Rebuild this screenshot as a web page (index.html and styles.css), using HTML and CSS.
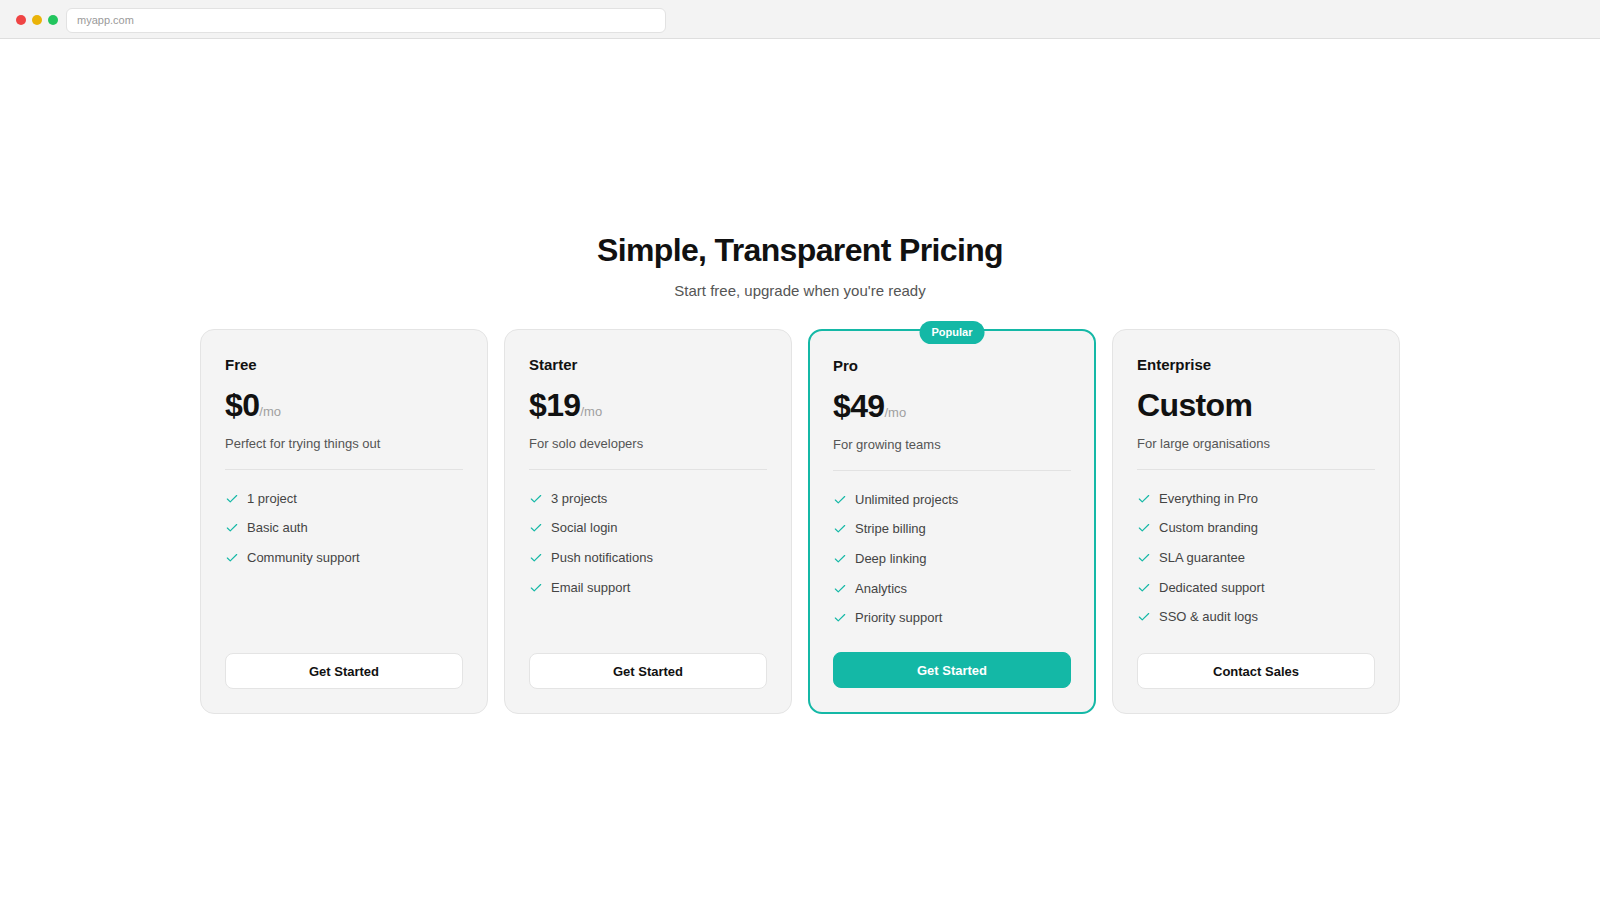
FILE: index.html
```
<!DOCTYPE html>
<html lang="en">
<head>
<meta charset="utf-8">
<title>Pricing</title>
<link rel="stylesheet" href="styles.css">
</head>
<body>
<div class="browser-bar">
  <div class="dots">
    <span class="dot red"></span>
    <span class="dot yellow"></span>
    <span class="dot green"></span>
  </div>
  <div class="address">myapp.com</div>
</div>
<main class="page">
  <section class="pricing">
    <h1 class="title">Simple, Transparent Pricing</h1>
    <p class="subtitle">Start free, upgrade when you're ready</p>
    <div class="plans">
      <div class="plan">
        <div class="plan-name">Free</div>
        <div class="price">$0<span class="per">/mo</span></div>
        <div class="desc">Perfect for trying things out</div>
        <ul class="features">
          <li><svg class="check" viewBox="0 0 24 24"><polyline points="20 6 9 17 4 12"/></svg>1 project</li>
          <li><svg class="check" viewBox="0 0 24 24"><polyline points="20 6 9 17 4 12"/></svg>Basic auth</li>
          <li><svg class="check" viewBox="0 0 24 24"><polyline points="20 6 9 17 4 12"/></svg>Community support</li>
        </ul>
        <button class="btn">Get Started</button>
      </div>
      <div class="plan">
        <div class="plan-name">Starter</div>
        <div class="price">$19<span class="per">/mo</span></div>
        <div class="desc">For solo developers</div>
        <ul class="features">
          <li><svg class="check" viewBox="0 0 24 24"><polyline points="20 6 9 17 4 12"/></svg>3 projects</li>
          <li><svg class="check" viewBox="0 0 24 24"><polyline points="20 6 9 17 4 12"/></svg>Social login</li>
          <li><svg class="check" viewBox="0 0 24 24"><polyline points="20 6 9 17 4 12"/></svg>Push notifications</li>
          <li><svg class="check" viewBox="0 0 24 24"><polyline points="20 6 9 17 4 12"/></svg>Email support</li>
        </ul>
        <button class="btn">Get Started</button>
      </div>
      <div class="plan featured">
        <span class="badge">Popular</span>
        <div class="plan-name">Pro</div>
        <div class="price">$49<span class="per">/mo</span></div>
        <div class="desc">For growing teams</div>
        <ul class="features">
          <li><svg class="check" viewBox="0 0 24 24"><polyline points="20 6 9 17 4 12"/></svg>Unlimited projects</li>
          <li><svg class="check" viewBox="0 0 24 24"><polyline points="20 6 9 17 4 12"/></svg>Stripe billing</li>
          <li><svg class="check" viewBox="0 0 24 24"><polyline points="20 6 9 17 4 12"/></svg>Deep linking</li>
          <li><svg class="check" viewBox="0 0 24 24"><polyline points="20 6 9 17 4 12"/></svg>Analytics</li>
          <li><svg class="check" viewBox="0 0 24 24"><polyline points="20 6 9 17 4 12"/></svg>Priority support</li>
        </ul>
        <button class="btn btn-primary">Get Started</button>
      </div>
      <div class="plan">
        <div class="plan-name">Enterprise</div>
        <div class="price">Custom</div>
        <div class="desc">For large organisations</div>
        <ul class="features">
          <li><svg class="check" viewBox="0 0 24 24"><polyline points="20 6 9 17 4 12"/></svg>Everything in Pro</li>
          <li><svg class="check" viewBox="0 0 24 24"><polyline points="20 6 9 17 4 12"/></svg>Custom branding</li>
          <li><svg class="check" viewBox="0 0 24 24"><polyline points="20 6 9 17 4 12"/></svg>SLA guarantee</li>
          <li><svg class="check" viewBox="0 0 24 24"><polyline points="20 6 9 17 4 12"/></svg>Dedicated support</li>
          <li><svg class="check" viewBox="0 0 24 24"><polyline points="20 6 9 17 4 12"/></svg>SSO &amp; audit logs</li>
        </ul>
        <button class="btn">Contact Sales</button>
      </div>
    </div>
  </section>
</main>
</body>
</html>
```
FILE: styles.css
```
* { box-sizing: border-box; }
html, body { margin: 0; padding: 0; }
body {
  font-family: "Liberation Sans", Arial, sans-serif;
  background: #ffffff;
  color: #111111;
  height: 900px;
  overflow: hidden;
}
.browser-bar {
  height: 39px;
  background: #f3f3f3;
  border-bottom: 1px solid #dedede;
  display: flex;
  align-items: center;
  padding: 2px 0 0 16px;
}
.dots { display: flex; gap: 6px; }
.dot { width: 10px; height: 10px; border-radius: 50%; display: block; }
.dot.red { background: #ef4444; }
.dot.yellow { background: #eab308; }
.dot.green { background: #22c55e; }
.address {
  margin-left: 8px;
  width: 600px;
  height: 25px;
  background: #ffffff;
  border: 1px solid #e2e2e2;
  border-radius: 6px;
  font-size: 11px;
  color: #9a9a9a;
  line-height: 23px;
  padding-left: 10px;
}
.page {
  height: 861px;
  display: flex;
  align-items: center;
  justify-content: center;
}
.pricing { width: 1200px; margin-top: 5px; }
.title {
  margin: 0;
  text-align: center;
  font-size: 32px;
  line-height: 40px;
  font-weight: 700;
  letter-spacing: -0.02em;
  color: #111111;
}
.subtitle {
  margin: 10px 0 0;
  text-align: center;
  font-size: 15px;
  line-height: 22px;
  color: #555555;
}
.plans {
  margin-top: 27px;
  display: grid;
  grid-template-columns: repeat(4, 1fr);
  gap: 16px;
}
.plan {
  position: relative;
  background: #f4f4f4;
  border: 1px solid #e4e4e4;
  border-radius: 14px;
  padding: 23px 24px 24px;
  display: flex;
  flex-direction: column;
}
.plan.featured {
  border: 2px solid #14b8a6;
  padding: 23px 23px 24px;
}
.badge {
  position: absolute;
  top: -10px;
  left: 50%;
  transform: translateX(-50%);
  background: #14b8a6;
  color: #ffffff;
  font-size: 11px;
  font-weight: 700;
  line-height: 15px;
  padding: 4px 12px;
  border-radius: 999px;
}
.plan-name {
  font-size: 15px;
  line-height: 24px;
  font-weight: 700;
  color: #111111;
}
.price {
  margin-top: 8px;
  font-size: 32px;
  line-height: 40px;
  height: 40px;
  font-weight: 700;
  letter-spacing: -0.02em;
  color: #111111;
}
.per {
  font-size: 13px;
  line-height: 1;
  font-weight: 400;
  letter-spacing: 0;
  color: #a0a0a0;
}
.desc {
  margin-top: 9px;
  font-size: 13px;
  line-height: 20px;
  color: #555555;
  padding-bottom: 15px;
  border-bottom: 1px solid #e2e2e2;
}
.features {
  list-style: none;
  margin: 0;
  padding: 19px 0 0;
  display: flex;
  flex-direction: column;
  gap: 9.6px;
  flex: 1;
}
.features li {
  display: flex;
  align-items: center;
  gap: 8px;
  font-size: 13px;
  line-height: 20px;
  color: #444444;
}
.check {
  width: 14px;
  height: 14px;
  fill: none;
  stroke: #14b8a6;
  stroke-width: 2;
  stroke-linecap: round;
  stroke-linejoin: round;
  flex: none;
}
.btn {
  margin-top: 26px;
  height: 36px;
  width: 100%;
  border: 1px solid #e4e4e4;
  background: #ffffff;
  border-radius: 8px;
  font-family: "Liberation Sans", Arial, sans-serif;
  font-size: 13px;
  font-weight: 700;
  color: #111111;
  cursor: pointer;
}
.btn-primary {
  margin-top: 22px;
  background: #14b8a6;
  border-color: #14b8a6;
  color: #ffffff;
}
```
